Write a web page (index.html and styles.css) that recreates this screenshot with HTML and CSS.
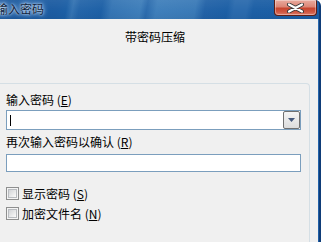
FILE: index.html
```html
<!DOCTYPE html>
<html lang="zh-CN">
<head>
<meta charset="utf-8">
<title>输入密码</title>
<link rel="stylesheet" href="styles.css">
</head>
<body>
<div class="window">
  <div class="titlebar">
    <span class="title">输入密码</span>
    <div class="close">
      <svg width="19" height="10" viewBox="0 0 19 10">
        <path d="M3 1.5 L16 8.5 M16 1.5 L3 8.5" stroke="#3a3a3a" stroke-width="4" stroke-linecap="round" fill="none"/>
        <path d="M3 1.5 L16 8.5 M16 1.5 L3 8.5" stroke="#ffffff" stroke-width="2.2" stroke-linecap="round" fill="none"/>
      </svg>
    </div>
  </div>
  <div class="client">
    <div class="heading">带密码压缩</div>
    <div class="group">
      <div class="label">输入密码 (<u>E</u>)</div>
      <div class="combo">
        <span class="caret"></span>
        <span class="drop">
          <svg width="7" height="4" viewBox="0 0 7 4"><path d="M0 0 H7 L3.5 4 Z" fill="#45597d"/></svg>
        </span>
      </div>
      <div class="label label2">再次输入密码以确认 (<u>R</u>)</div>
      <div class="input"></div>
      <div class="check first"><span class="cb"></span><span>显示密码 (<u>S</u>)</span></div>
      <div class="check"><span class="cb"></span><span>加密文件名 (<u>N</u>)</span></div>
    </div>
  </div>
</div>
</body>
</html>
```
FILE: styles.css
```css
html, body {
  margin: 0;
  padding: 0;
}
body {
  width: 334px;
  height: 242px;
  overflow: hidden;
  background: #ffffff;
  font-family: "Noto Sans CJK SC", "Liberation Sans", sans-serif;
  font-size: 12px;
  color: #000;
}
.window {
  width: 319px;
  height: 242px;
  border-right: 2px solid #0f3d78;
  border-top-right-radius: 6px;
  background: linear-gradient(180deg, #2a6ab0, #1f5ea6);
  display: flex;
  flex-direction: column;
  overflow: hidden;
}
.titlebar {
  height: 19px;
  flex: none;
  display: flex;
  justify-content: space-between;
  align-items: flex-start;
  border-bottom: 0;
  background:
    linear-gradient(180deg, rgba(255,255,255,0.06), rgba(255,255,255,0) 60%, rgba(0,0,0,0.04)),
    linear-gradient(100deg, #1b589d 0%, #1c5ca2 18%, #1c5fa5 21%, #3473b2 23%, #2465a9 25%, #1d60a6 32%, #3575b4 35%, #3e7eba 44%, #2b6bad 46%, #3f7fbb 49%, #3a7ab7 61%, #2262a7 64%, #1c5fa5 71%, #2a6aad 73%, #2a6aad 77%, #1c5fa5 79%, #1a5da4 100%);
}
.title {
  margin-left: -4px;
  margin-top: 2px;
  line-height: 14px;
  color: #0f1f3d;
  text-shadow: 0 0 2px #d8e8f8, 0 0 4px #b5d0ef, 0 0 6px #9dc0ea;
}
.close {
  width: 43px;
  height: 16px;
  box-sizing: border-box;
  margin-right: 2px;
  border: 1px solid #5e1e15;
  border-top: none;
  border-radius: 0 0 4px 4px;
  background: linear-gradient(180deg, #e9ab9f 0%, #dc8676 45%, #c8452f 55%, #cf5843 80%, #de7d6a 100%);
  box-shadow: inset 0 0 0 1px rgba(255,255,255,0.35);
  display: flex;
  align-items: center;
  justify-content: center;
}
.client {
  flex: 1;
  margin-right: 1px;
  padding-right: 8px;
  background: #f0f0f0;
  display: flex;
  flex-direction: column;
}
.heading {
  padding-top: 11px;
  line-height: 14px;
  text-align: center;
}
.group {
  flex: 1;
  margin-top: 39px;
  margin-left: -3px;
  border: 1px solid #d5dfe5;
  border-bottom: none;
  border-top-right-radius: 4px;
  padding: 9px 0 0 8px;
}
.label {
  line-height: 14px;
}
.label2 {
  margin-top: 5px;
}
.combo {
  margin-top: 3px;
  width: 295px;
  height: 20px;
  box-sizing: border-box;
  border: 1px solid #7b9ebd;
  background: #fff;
  display: flex;
  align-items: center;
  justify-content: space-between;
}
.caret {
  width: 1px;
  height: 11px;
  margin-left: 3px;
  background: #000;
}
.drop {
  width: 17px;
  height: 18px;
  box-sizing: border-box;
  border: 1px solid #707070;
  border-radius: 2px;
  background: linear-gradient(180deg, #f4f4f4 0%, #e8e8e8 50%, #dcdcdc 100%);
  display: flex;
  align-items: center;
  justify-content: center;
}
.input {
  margin-top: 5px;
  width: 295px;
  height: 18px;
  box-sizing: border-box;
  border: 1px solid #7b9ebd;
  background: #fff;
}
.check {
  margin-top: 7px;
  height: 13px;
  line-height: 13px;
  display: flex;
  align-items: center;
  gap: 3px;
}
.check.first {
  margin-top: 15px;
}
.cb {
  width: 13px;
  height: 13px;
  box-sizing: border-box;
  border: 1px solid #8e8f8f;
  background: #f4f4f4;
  padding: 1px;
}
.cb::before {
  content: "";
  display: block;
  width: 100%;
  height: 100%;
  box-sizing: border-box;
  border: 1px solid #b9bcc0;
  background: linear-gradient(135deg, #d2d4d7 0%, #e6e7e8 50%, #fbfbfb 100%);
}
u {
  text-decoration: underline;
  text-underline-offset: 1px;
}
```
